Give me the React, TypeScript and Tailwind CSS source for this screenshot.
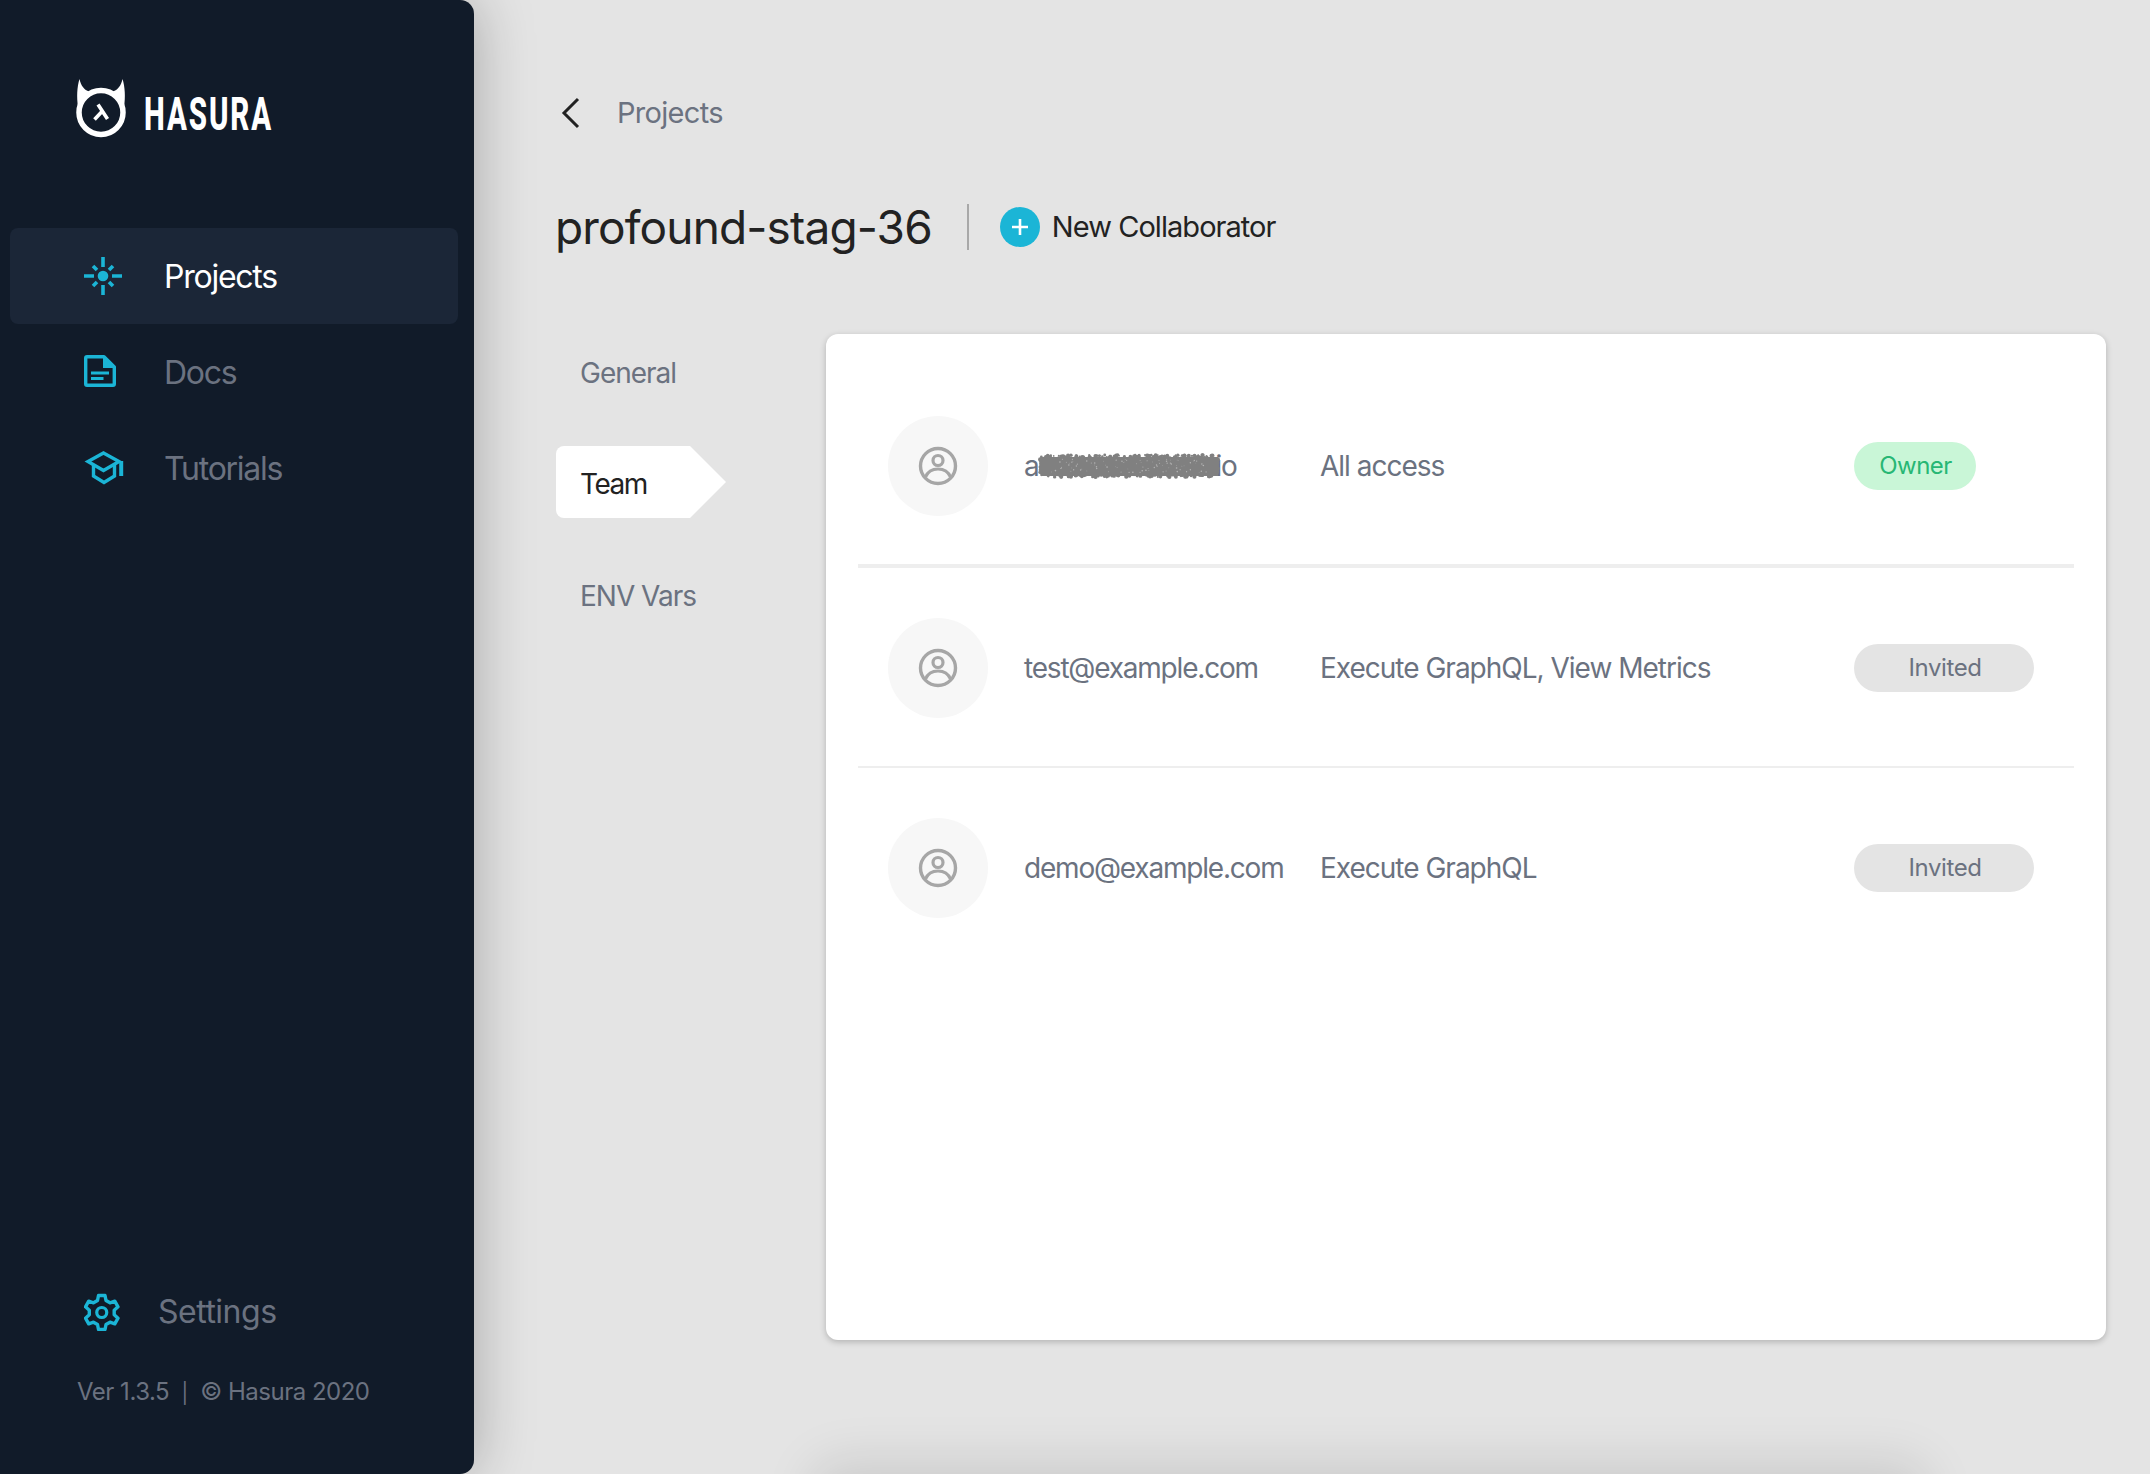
import { ReactNode } from 'react';

const CYAN = '#1bb5d6';

// noisy scribble used to hide the owner's address
function makeBlob() {
  const dots: { x: number; y: number; r: number; fill: string }[] = [];
  let seed = 7;
  const rnd = () => {
    seed = (seed * 16807) % 2147483647;
    return seed / 2147483647;
  };
  for (let i = 0; i < 420; i++) {
    const top = rnd() > 0.5;
    dots.push({
      x: 7 + rnd() * 175,
      y: top ? 4 + rnd() * 5 : 21 + rnd() * 5,
      r: 0.8 + rnd() * 1.3,
      fill: '#808080',
    });
  }
  for (let i = 0; i < 30; i++) {
    dots.push({ x: 6 + rnd() * 3, y: 8 + rnd() * 14, r: 1 + rnd() * 1.5, fill: '#808080' });
    dots.push({ x: 181 + rnd() * 3, y: 8 + rnd() * 14, r: 1 + rnd() * 1.5, fill: '#808080' });
  }
  for (let i = 0; i < 90; i++) {
    dots.push({ x: 14 + rnd() * 160, y: 8 + rnd() * 14, r: 0.3 + rnd() * 0.5, fill: '#b4b4b4' });
  }
  return dots;
}
const blob = makeBlob();

function Logo() {
  return (
    <svg width="50" height="60" viewBox="0 0 50 60" className="shrink-0">
      <circle cx="25" cy="34.5" r="22" fill="none" stroke="#fff" strokeWidth="5.5" />
      <path d="M3.5 1C1 9 .5 19 2 29L13 13.5C8.500 12 5 8 3.500 1Z" fill="#fff" />
      <path d="M46.500 1C49 9 49.500 19 48 29L37 13.500C41.500 12 45 8 46.500 1Z" fill="#fff" />
      <path d="M22 26.500L31.500 41M26 33.500L18.500 41.500" fill="none" stroke="#fff" strokeWidth="3.600" />
    </svg>
  );
}

function SunIcon() {
  return (
    <svg width="40" height="40" viewBox="0 0 40 40" className="shrink-0">
      <circle cx="19" cy="20" r="5.300" fill={CYAN} />
      <g stroke={CYAN} strokeWidth="3.600">
        <path d="M19 1v10M19 29v10M0 20h10M28 20h10" />
        <path d="M9 10l4 4M29 10l-4 4M9 30l4-4M29 30l-4-4" />
      </g>
    </svg>
  );
}

function DocIcon() {
  return (
    <svg width="40" height="40" viewBox="0 0 40 40" className="shrink-0">
      <path
        d="M1.700 6Q1.700 4.700 3 4.700H20L30.300 15V32Q30.300 33.300 29 33.300H3Q1.700 33.300 1.700 32Z"
        fill="none"
        stroke={CYAN}
        strokeWidth="3.400"
        strokeLinejoin="round"
      />
      <path d="M19 4.700V16H30.300Z" fill={CYAN} />
      <path d="M7 21H25M7 26.500H19.500" stroke={CYAN} strokeWidth="3" />
    </svg>
  );
}

function CapIcon() {
  return (
    <svg width="40" height="40" viewBox="0 0 40 40" className="shrink-0">
      <path d="M19.500 5L35 13.500 19.500 22.500 4 13.500Z" fill="none" stroke={CYAN} strokeWidth="3.400" />
      <path d="M9.500 17V28L20 34.500 30.500 28V17" fill="none" stroke={CYAN} strokeWidth="3.400" />
      <path d="M37.200 13V28" stroke={CYAN} strokeWidth="4" />
    </svg>
  );
}

function GearIcon() {
  return (
    <svg width="36" height="38" viewBox="0 0 36 38" className="shrink-0">
      <path
        d="M14.500 2.500H21L22 7.500L26 9.800L30.800 8.200L34 13.800L30.200 17.200V21.800L34 25.200L30.800 30.800L26 29.200L22 31.500L21 36.500H14.500L13.500 31.500L9.500 29.200L4.700 30.800L1.500 25.200L5.300 21.800V17.200L1.500 13.800L4.700 8.200L9.500 9.800L13.500 7.500Z"
        fill="none"
        stroke={CYAN}
        strokeWidth="3.400"
        strokeLinejoin="round"
      />
      <circle cx="17.750" cy="19.500" r="5" fill="none" stroke={CYAN} strokeWidth="3.200" />
    </svg>
  );
}

function UserIcon() {
  return (
    <svg width="40" height="40" viewBox="0 0 40 40">
      <circle cx="20" cy="20" r="17.500" fill="none" stroke="#a6a6a6" strokeWidth="3.400" />
      <circle cx="20" cy="14.500" r="5" fill="none" stroke="#a6a6a6" strokeWidth="3.200" />
      <path d="M7.500 31C10 25 15 23 20 23C25 23 30 25 32.500 31" fill="none" stroke="#a6a6a6" strokeWidth="3.200" />
    </svg>
  );
}

function NavItem({ icon, label, active }: { icon: ReactNode; label: string; active?: boolean }) {
  return (
    <div
      className={
        active
          ? 'flex h-[96px] items-center rounded-[8px] bg-[#1b2637] pl-[74px] text-white'
          : 'flex h-[96px] items-center rounded-[8px] pl-[74px] text-[#6b7280]'
      }
    >
      <span className="flex w-[80px]">{icon}</span>
      <span className="pt-[2px] text-[32px] leading-none tracking-[-1.25px]">{label}</span>
    </div>
  );
}

function Sidebar() {
  return (
    <aside className="z-10 flex h-full w-[474px] shrink-0 flex-col rounded-r-[14px] bg-[#111b29] shadow-[0_0_60px_rgba(0,0,0,0.28)]">
      <div className="flex h-[228px] items-start gap-[18px] pl-[76px] pt-[78px]">
        <Logo />
        <span className="mt-[13px] block w-[127px] origin-left scale-x-[0.64] whitespace-nowrap font-['Roboto',sans-serif] text-[46px] font-extrabold leading-[46px] tracking-[3px] text-white">
          HASURA
        </span>
      </div>
      <nav className="ml-[10px] mr-[16px] flex flex-col">
        <NavItem icon={<SunIcon />} label="Projects" active />
        <NavItem icon={<DocIcon />} label="Docs" />
        <NavItem icon={<CapIcon />} label="Tutorials" />
      </nav>
      <div className="mt-auto pb-[65px] pl-[84px]">
        <div className="flex items-center text-[32px] leading-none tracking-[-0.5px] text-[#6b7280]">
          <span className="flex w-[74px]">
            <GearIcon />
          </span>
          Settings
        </div>
        <div className="-ml-[7px] mt-[45px] whitespace-pre text-[24px] leading-[32px] tracking-[-0.5px] text-[#6b7280]">
          Ver 1.3.5  <span className="text-[20px]">|</span>  © Hasura 2020
        </div>
      </div>
    </aside>
  );
}

function Pill({ label, owner }: { label: string; owner?: boolean }) {
  return owner ? (
    <span className="flex h-[48px] w-[122px] items-center justify-center rounded-full bg-[#c9f6d7] pl-[1px] text-[24px] tracking-[-0.5px] text-[#27b774]">
      {label}
    </span>
  ) : (
    <span className="flex h-[48px] w-[180px] items-center justify-center rounded-full bg-[#e4e4e4] pl-[2px] text-[24px] tracking-[-0.4px] text-[#6b7280]">
      {label}
    </span>
  );
}

function Row({
  email,
  access,
  pill,
  className,
}: {
  email: ReactNode;
  access: string;
  pill: ReactNode;
  className: string;
}) {
  return (
    <div className={`flex items-center px-[30px] ${className}`}>
      <div className="flex h-[100px] w-[100px] shrink-0 items-center justify-center rounded-full bg-[#f7f7f7]">
        <UserIcon />
      </div>
      <div className="ml-[36px] w-[296px] shrink-0 whitespace-nowrap text-[28px] tracking-[-1.2px] text-[#6b7280]">
        {email}
      </div>
      <div className="w-[534px] shrink-0 whitespace-nowrap text-[28px] tracking-[-1px] text-[#6b7280]">{access}</div>
      {pill}
    </div>
  );
}

function RedactedEmail() {
  return (
    <span className="inline-flex items-center">
      a
      <span className="relative inline-block h-[28px] w-[177px]">
        <svg width="190" height="30" viewBox="0 0 190 30" className="absolute -left-[5px] -top-[1px]">
          <rect x="7" y="6" width="177" height="19" fill="#808080" />
          {blob.map((d, i) => (
            <circle key={i} cx={d.x} cy={d.y} r={d.r} fill={d.fill} />
          ))}
        </svg>
      </span>
      io
    </span>
  );
}

export default function App() {
  return (
    <div className="relative flex h-[1474px] w-[2150px] overflow-hidden bg-[#e4e4e4] font-['Inter',sans-serif]">
      <Sidebar />
      <main className="flex-1 pl-[81px] pr-[44px]">
        <div className="mt-[88px] flex h-[50px] items-center">
          <svg width="22" height="34" viewBox="0 0 22 34" className="ml-[5px] shrink-0">
            <path d="M18 3L4 17L18 31" fill="none" stroke="#222" strokeWidth="3" />
          </svg>
          <span className="ml-[35px] text-[29px] tracking-[-0.7px] text-[#6b7280]">Projects</span>
        </div>
        <div className="mt-[59px] flex h-[60px] items-center">
          <h1 className="text-[46px] font-normal leading-none tracking-[-0.85px] text-[#222]">profound-stag-36</h1>
          <span className="ml-[35px] h-[46px] w-[2px] bg-[#a8a8a8]" />
          <span className="ml-[31px] flex h-[40px] w-[40px] items-center justify-center rounded-full bg-[#1bb5d6]">
            <svg width="20" height="20" viewBox="0 0 20 20">
              <path d="M10 2V18M2 10H18" stroke="#fff" strokeWidth="2.600" />
            </svg>
          </span>
          <span className="ml-[12px] text-[29px] tracking-[-0.95px] text-[#222]">New Collaborator</span>
        </div>
        <div className="ml-[1px] mt-[77px] flex">
          <div className="flex w-[270px] shrink-0 flex-col pt-[3px] text-[28px] tracking-[-1px]">
            <div className="flex h-[72px] items-center pl-[24px] text-[#6b7280]">General</div>
            <div className="mt-[37px] flex h-[72px] w-[170px] items-center rounded-l-[8px] bg-white pl-[24px] pt-[4px] tracking-[-1.5px] text-[#222] [clip-path:polygon(0_0,134px_0,170px_50%,134px_100%,0_100%)]">
              Team
            </div>
            <div className="mt-[42px] flex h-[72px] items-center pl-[24px] text-[#6b7280]">ENV Vars</div>
          </div>
          <section className="h-[1006px] w-[1280px] rounded-[12px] bg-white px-[32px] pt-[34px] shadow-[0_2px_6px_rgba(0,0,0,0.22)]">
            <Row
              className="h-[200px] border-b-[4px] border-[#eeeeee]"
              email={<RedactedEmail />}
              access="All access"
              pill={<Pill label="Owner" owner />}
            />
            <Row
              className="h-[200px] border-b-[2px] border-[#eeeeee] pt-[2px]"
              email="test@example.com"
              access="Execute GraphQL, View Metrics"
              pill={<Pill label="Invited" />}
            />
            <Row
              className="h-[200px]"
              email="demo@example.com"
              access="Execute GraphQL"
              pill={<Pill label="Invited" />}
            />
          </section>
        </div>
      </main>
      {/* something sits just under the fold, only its shadow shows */}
      <div className="absolute left-[830px] top-[1480px] h-[40px] w-[1080px] rounded-[12px] bg-[#d4d4d4] shadow-[0_0_50px_20px_rgba(0,0,0,0.1)]" />
    </div>
  );
}
